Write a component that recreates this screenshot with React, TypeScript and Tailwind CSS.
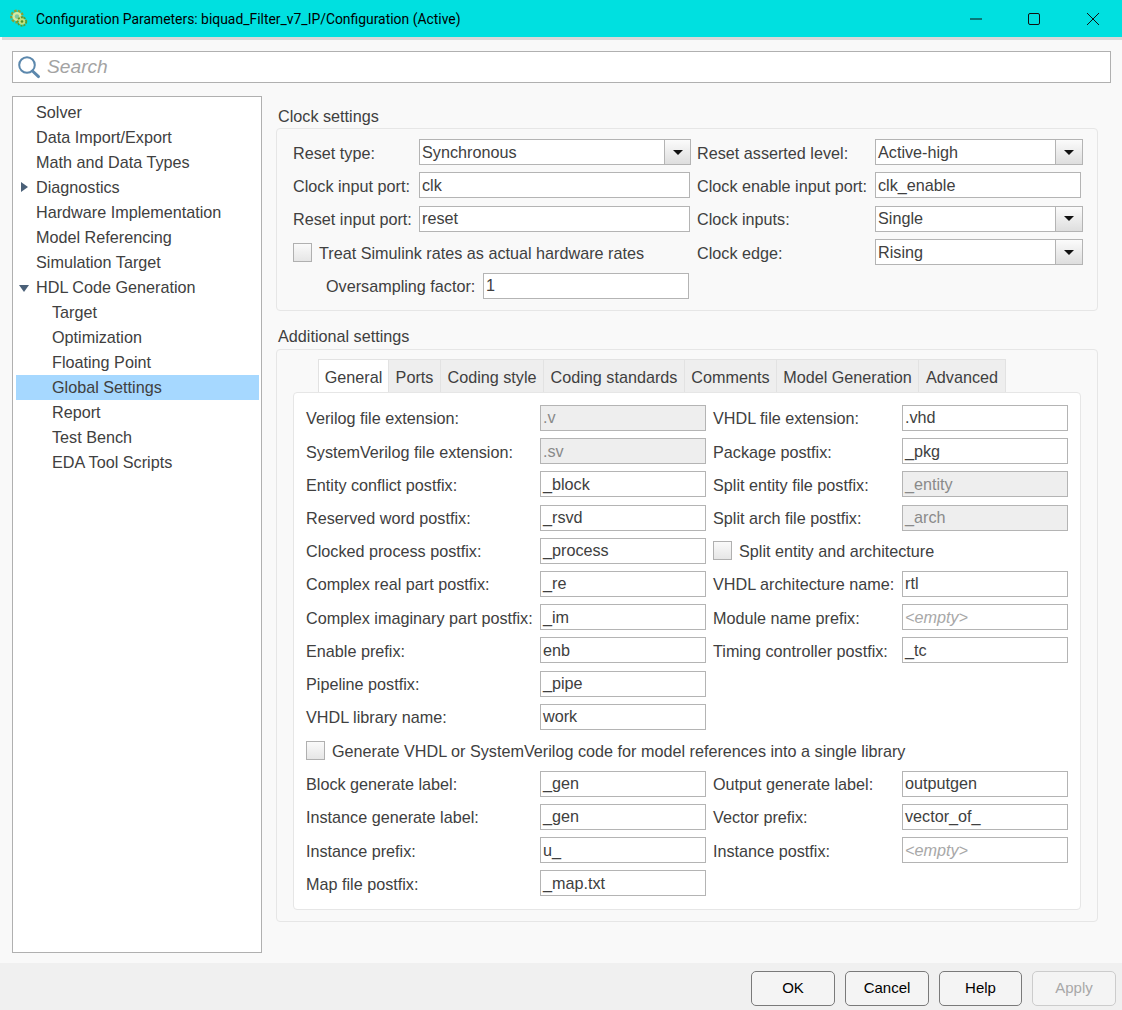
import React from "react";

const font = "font-['Liberation_Sans',Arial,sans-serif]";

const tree: { label: string; depth: number; arrow?: "right" | "down"; active?: boolean }[] = [
  { label: "Solver", depth: 0 },
  { label: "Data Import/Export", depth: 0 },
  { label: "Math and Data Types", depth: 0 },
  { label: "Diagnostics", depth: 0, arrow: "right" },
  { label: "Hardware Implementation", depth: 0 },
  { label: "Model Referencing", depth: 0 },
  { label: "Simulation Target", depth: 0 },
  { label: "HDL Code Generation", depth: 0, arrow: "down" },
  { label: "Target", depth: 1 },
  { label: "Optimization", depth: 1 },
  { label: "Floating Point", depth: 1 },
  { label: "Global Settings", depth: 1, active: true },
  { label: "Report", depth: 1 },
  { label: "Test Bench", depth: 1 },
  { label: "EDA Tool Scripts", depth: 1 },
];

const tabs: { label: string; width: string }[] = [
  { label: "General", width: "w-[71px]" },
  { label: "Ports", width: "w-[52px]" },
  { label: "Coding style", width: "w-[103px]" },
  { label: "Coding standards", width: "w-[141px]" },
  { label: "Comments", width: "w-[92px]" },
  { label: "Model Generation", width: "w-[142px]" },
  { label: "Advanced", width: "w-[87px]" },
];

type Field = { label: string; value: string; kind?: "disabled" | "empty" | "check" };

const generalLeft: Field[] = [
  { label: "Verilog file extension:", value: ".v", kind: "disabled" },
  { label: "SystemVerilog file extension:", value: ".sv", kind: "disabled" },
  { label: "Entity conflict postfix:", value: "_block" },
  { label: "Reserved word postfix:", value: "_rsvd" },
  { label: "Clocked process postfix:", value: "_process" },
  { label: "Complex real part postfix:", value: "_re" },
  { label: "Complex imaginary part postfix:", value: "_im" },
  { label: "Enable prefix:", value: "enb" },
  { label: "Pipeline postfix:", value: "_pipe" },
  { label: "VHDL library name:", value: "work" },
];

const generalRight: Field[] = [
  { label: "VHDL file extension:", value: ".vhd" },
  { label: "Package postfix:", value: "_pkg" },
  { label: "Split entity file postfix:", value: "_entity", kind: "disabled" },
  { label: "Split arch file postfix:", value: "_arch", kind: "disabled" },
  { label: "Split entity and architecture", value: "", kind: "check" },
  { label: "VHDL architecture name:", value: "rtl" },
  { label: "Module name prefix:", value: "<empty>", kind: "empty" },
  { label: "Timing controller postfix:", value: "_tc" },
];

const lowerLeft: Field[] = [
  { label: "Block generate label:", value: "_gen" },
  { label: "Instance generate label:", value: "_gen" },
  { label: "Instance prefix:", value: "u_" },
  { label: "Map file postfix:", value: "_map.txt" },
];

const lowerRight: Field[] = [
  { label: "Output generate label:", value: "outputgen" },
  { label: "Vector prefix:", value: "vector_of_" },
  { label: "Instance postfix:", value: "<empty>", kind: "empty" },
];

function TextBox({ value, kind, className }: { value: string; kind?: Field["kind"]; className: string }) {
  const tone =
    kind === "disabled"
      ? "bg-[#eeeeee] text-[#8a8a8a]"
      : kind === "empty"
        ? "bg-white italic text-[#a8a8a8]"
        : "bg-white text-[#404040]";
  return (
    <div className={`flex h-[26px] items-center border border-[#b4b4b4] pb-[1px] pl-[2px] ${tone} ${className}`}>
      {value}
    </div>
  );
}

function Select({ value, className, arrow }: { value: string; className: string; arrow: string }) {
  return (
    <div className={`flex h-[26px] items-stretch border border-[#b4b4b4] bg-white ${className}`}>
      <div className="flex flex-1 items-center pb-[0.5px] pl-[2px]">{value}</div>
      <div className={`flex items-center justify-center border-l border-[#b4b4b4] bg-gradient-to-b from-[#fbfbfb] to-[#dedede] ${arrow}`}>
        <div className="h-0 w-0 border-x-[5px] border-t-[5px] border-x-transparent border-t-[#111111]" />
      </div>
    </div>
  );
}

function Check({ label, gap }: { label: string; gap: string }) {
  return (
    <div className={`flex h-[26px] items-center ${gap}`}>
      <div className="h-[19px] w-[19px] border border-[#b0b0b0] bg-gradient-to-b from-[#fafafa] to-[#e6e6e6]" />
      <span className="pt-[1px]">{label}</span>
    </div>
  );
}

function GeneralColumn({ fields, labelWidth, inputWidth }: { fields: Field[]; labelWidth: string; inputWidth: string }) {
  return (
    <div className="flex flex-col gap-[7.2px]">
      {fields.map((f) =>
        f.kind === "check" ? (
          <Check key={f.label} label={f.label} gap="gap-[7px]" />
        ) : (
          <div key={f.label} className="flex h-[26px] items-center">
            <span className={`${labelWidth} whitespace-nowrap pt-[1px]`}>{f.label}</span>
            <TextBox value={f.value} kind={f.kind} className={inputWidth} />
          </div>
        ),
      )}
    </div>
  );
}

function FormRow({ label, width, children }: { label: string; width: string; children: React.ReactNode }) {
  return (
    <div className="flex h-[26px] items-center">
      <span className={`${width} whitespace-nowrap pt-[1.5px]`}>{label}</span>
      {children}
    </div>
  );
}

function GearIcon() {
  return (
    <svg width="20" height="20" viewBox="0 0 20 20" className="shrink-0">
      <circle cx="7" cy="7.5" r="5.6" fill="none" stroke="#86a03a" strokeWidth="2.6" strokeDasharray="2.6 1.2" />
      <circle cx="7" cy="7.5" r="4.6" fill="#d9e9a0" />
      <circle cx="7" cy="7.5" r="2.2" fill="#7fc8a0" />
      <circle cx="12" cy="12.5" r="4.2" fill="none" stroke="#5d9a2e" strokeWidth="2" strokeDasharray="2 1" />
      <circle cx="12" cy="12.5" r="3.2" fill="#c3e07a" />
      <circle cx="12" cy="12.5" r="1.3" fill="#4f8f2c" />
    </svg>
  );
}

export default function App() {
  return (
    <div className={`flex h-[1010px] w-[1122px] flex-col overflow-hidden bg-[#f9f9f9] text-[16.2px] leading-none text-[#404040] ${font}`}>
      {/* title bar */}
      <div className="flex h-[37px] shrink-0 items-center bg-[#00e0e0] pl-[10px] text-black">
        <GearIcon />
        <span className="ml-[6px] pt-[2px] font-['Roboto',sans-serif] text-[13.9px]">
          Configuration Parameters: biquad_Filter_v7_IP/Configuration (Active)
        </span>
        <div className="ml-auto flex items-center">
          <svg width="12" height="12" viewBox="0 0 12 12" className="mr-[46px]">
            <path d="M0 6h12" stroke="#111" strokeWidth="1" />
          </svg>
          <svg width="12" height="12" viewBox="0 0 12 12" className="mr-[47px]">
            <rect x="0.5" y="0.5" width="11" height="11" rx="1.5" fill="none" stroke="#111" strokeWidth="1" />
          </svg>
          <svg width="12" height="12" viewBox="0 0 12 12" className="mr-[23px]">
            <path d="M0 0l12 12M12 0L0 12" stroke="#111" strokeWidth="1" />
          </svg>
        </div>
      </div>
      <div className="ml-[2px] h-[3px] shrink-0 bg-[#d9d9d9]" />

      {/* search */}
      <div className="ml-[12px] mr-[11px] mt-[11px] flex h-[32px] shrink-0 items-center border border-[#b0b0b0] bg-white pl-[4px]">
        <svg width="24" height="26" viewBox="0 0 24 26">
          <circle cx="10" cy="11" r="7.8" fill="none" stroke="#5c88ad" strokeWidth="2" />
          <path d="M15.5 17l6 5.6" stroke="#5c88ad" strokeWidth="3" strokeLinecap="round" />
        </svg>
        <span className="ml-[6px] pb-[1px] text-[19.2px] italic text-[#a3a3a3]">Search</span>
      </div>

      <div className="flex min-h-0 flex-1 pl-[12px] pr-[24px] pt-[13px]">
        {/* tree */}
        <div className="flex h-[857px] w-[250px] shrink-0 flex-col border border-[#b0b0b0] bg-white py-[3px] pl-[3px] pr-[2px]">
          {tree.map((t) => (
            <div
              key={t.label}
              className={`relative flex h-[25px] shrink-0 items-center pb-[1px] ${t.depth ? "pl-[36px]" : "pl-[20px]"} ${t.active ? "bg-[#a6d8ff]" : ""}`}
            >
              {t.arrow === "right" && (
                <div className="absolute left-[5px] top-[7px] h-0 w-0 border-y-[5px] border-l-[7px] border-y-transparent border-l-[#4a6078]" />
              )}
              {t.arrow === "down" && (
                <div className="absolute left-[3px] top-[10px] h-0 w-0 border-x-[5px] border-t-[7px] border-x-transparent border-t-[#4a6078]" />
              )}
              {t.label}
            </div>
          ))}
        </div>

        {/* settings */}
        <div className="ml-[14px] flex flex-1 flex-col">
          <div className="ml-[2px] mt-[12px] h-[16px] leading-[16px]">Clock settings</div>
          <div className="mt-[4px] flex h-[183px] rounded-[4px] border border-[#e6e6e6] pl-[16px] pt-[10px]">
            <div className="flex w-[404px] flex-col gap-[7.4px]">
              <FormRow label="Reset type:" width="w-[126px]">
                <Select value="Synchronous" className="w-[272px]" arrow="w-[26px]" />
              </FormRow>
              <FormRow label="Clock input port:" width="w-[126px]">
                <TextBox value="clk" className="w-[271px]" />
              </FormRow>
              <FormRow label="Reset input port:" width="w-[126px]">
                <TextBox value="reset" className="w-[271px]" />
              </FormRow>
              <Check label="Treat Simulink rates as actual hardware rates" gap="gap-[7px]" />
              <div className="flex h-[26px] items-center pl-[33px]">
                <span className="w-[157px] whitespace-nowrap pt-[2px]">Oversampling factor:</span>
                <TextBox value="1" className="w-[206px]" />
              </div>
            </div>
            <div className="flex flex-col gap-[7.4px]">
              <FormRow label="Reset asserted level:" width="w-[178px]">
                <Select value="Active-high" className="w-[208px]" arrow="w-[27px]" />
              </FormRow>
              <FormRow label="Clock enable input port:" width="w-[178px]">
                <TextBox value="clk_enable" className="w-[206px]" />
              </FormRow>
              <FormRow label="Clock inputs:" width="w-[178px]">
                <Select value="Single" className="w-[208px]" arrow="w-[27px]" />
              </FormRow>
              <FormRow label="Clock edge:" width="w-[178px]">
                <Select value="Rising" className="w-[208px]" arrow="w-[27px]" />
              </FormRow>
            </div>
          </div>

          <div className="ml-[2px] mt-[17px] h-[17px] leading-[16px]">Additional settings</div>
          <div className="mt-[4px] flex h-[573px] flex-col rounded-[4px] border border-[#e6e6e6] px-[16px] pt-[9px]">
            <div className="ml-[25px] flex h-[33px] shrink-0">
              {tabs.map((t, i) => (
                <div
                  key={t.label}
                  className={`flex items-center justify-center whitespace-nowrap border-t border-r border-[#e2e2e2] pt-[2px] ${t.width} ${
                    i === 0 ? "border-l bg-white" : "bg-[#eeeeee]"
                  }`}
                >
                  {t.label}
                </div>
              ))}
            </div>
            <div className="flex h-[518px] flex-col rounded-[4px] border border-[#e6e6e6] bg-white pl-[12px] pt-[12px]">
              <div className="flex">
                <div className="w-[407px]">
                  <GeneralColumn fields={generalLeft} labelWidth="w-[234px]" inputWidth="w-[166px]" />
                </div>
                <GeneralColumn fields={generalRight} labelWidth="w-[189px]" inputWidth="w-[166px]" />
              </div>
              <div className="mt-[7.6px]">
                <Check label="Generate VHDL or SystemVerilog code for model references into a single library" gap="gap-[7px]" />
              </div>
              <div className="mt-[7.6px] flex">
                <div className="w-[407px]">
                  <GeneralColumn fields={lowerLeft} labelWidth="w-[234px]" inputWidth="w-[166px]" />
                </div>
                <GeneralColumn fields={lowerRight} labelWidth="w-[189px]" inputWidth="w-[166px]" />
              </div>
            </div>
          </div>
        </div>
      </div>

      {/* footer */}
      <div className="flex h-[47px] shrink-0 items-start justify-end gap-[10px] bg-[#f0f0f0] pr-[6px] pt-[8px] text-black">
        <button className="h-[35px] w-[84px] rounded-[5px] border border-[#7a7a7a] bg-[#f4f4f4] pb-[2px] text-[15px]">OK</button>
        <button className="h-[35px] w-[84px] rounded-[5px] border border-[#7a7a7a] bg-[#f4f4f4] pb-[2px] text-[15px]">Cancel</button>
        <button className="h-[35px] w-[83px] rounded-[5px] border border-[#7a7a7a] bg-[#f4f4f4] pb-[2px] text-[15px]">Help</button>
        <button className="h-[35px] w-[84px] rounded-[5px] border border-[#cccccc] bg-[#f4f4f4] pb-[2px] text-[15px] text-[#a8a8a8]">Apply</button>
      </div>
    </div>
  );
}
